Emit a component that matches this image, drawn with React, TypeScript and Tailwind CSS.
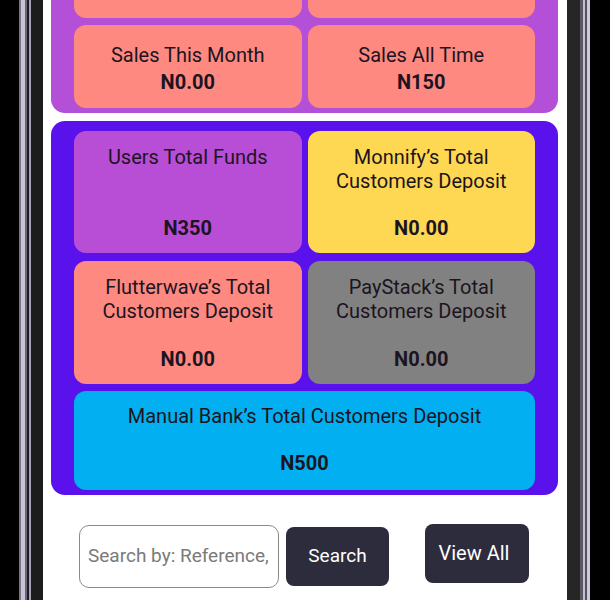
import React from "react";

const font = { fontFamily: "Roboto, 'Noto Sans', Arial, sans-serif" };

function BigCard({
  title,
  value,
  bg,
  h,
}: {
  title: React.ReactNode;
  value: string;
  bg: string;
  h: string;
}) {
  return (
    <div
      className={`flex flex-col items-center justify-between rounded-[12px] px-2 pt-[14px] pb-[13px] text-center text-[20px] leading-[24px] text-[#1c1420] ${bg} ${h}`}
    >
      <div>{title}</div>
      <div className="font-bold">{value}</div>
    </div>
  );
}

function SmallCard({ title, value, h }: { title?: string; value?: string; h: string }) {
  return (
    <div
      className={`flex flex-col items-center justify-center gap-[3px] rounded-[12px] bg-[#fd8981] pt-[4px] text-center text-[20px] leading-[24px] text-[#1c1420] ${h}`}
    >
      {title && <div>{title}</div>}
      {value && <div className="font-bold">{value}</div>}
    </div>
  );
}

export default function App() {
  return (
    <div className="flex h-[600px] w-[610px] overflow-hidden bg-black" style={font}>
      {/* left bezel */}
      <div className="flex h-full w-[43px] shrink-0">
        <div className="w-[19px] bg-black" />
        <div className="w-[2px] bg-[#7a7680]" />
        <div className="w-[4px] bg-[#cac3d8]" />
        <div className="w-[2px] bg-[#6a6670]" />
        <div className="w-[2px] bg-[#1e1e1e]" />
        <div className="w-[2px] bg-[#a69eb6]" />
        <div className="w-[12px] bg-[#1c1c1c]" />
      </div>

      {/* screen */}
      <div className="flex h-full w-[524px] shrink-0 flex-col overflow-hidden bg-white">
        {/* purple panel */}
        <div className="ml-[8px] mr-[9px] -mt-[90px] rounded-[14px] bg-[#b44fd7] px-[23px] pt-[10px] pb-[5px]">
          <div className="grid grid-cols-2 gap-x-[6px] gap-y-[7px]">
            <SmallCard h="h-[98px]" />
            <SmallCard h="h-[98px]" />
            <SmallCard title="Sales This Month" value="N0.00" h="h-[83px]" />
            <SmallCard title="Sales All Time" value="N150" h="h-[83px]" />
          </div>
        </div>

        {/* blue panel */}
        <div className="ml-[8px] mr-[9px] mt-[8px] rounded-[14px] bg-[#5a12ed] px-[23px] pt-[10px] pb-[5px]">
          <div className="grid grid-cols-2 gap-x-[6px] gap-y-[8px]">
            <BigCard title="Users Total Funds" value="N350" bg="bg-[#b84dd6]" h="h-[122px]" />
            <BigCard
              title={
                <>
                  Monnify’s Total
                  <br />
                  Customers Deposit
                </>
              }
              value="N0.00"
              bg="bg-[#fed852]"
              h="h-[122px]"
            />
            <BigCard
              title={
                <>
                  Flutterwave’s Total
                  <br />
                  Customers Deposit
                </>
              }
              value="N0.00"
              bg="bg-[#fd8981]"
              h="h-[123px]"
            />
            <BigCard
              title={
                <>
                  PayStack’s Total
                  <br />
                  Customers Deposit
                </>
              }
              value="N0.00"
              bg="bg-[#818181]"
              h="h-[123px]"
            />
          </div>
          <div className="mt-[7px] flex h-[99px] flex-col items-center justify-between rounded-[12px] bg-[#02aff0] pt-[13px] pb-[15px] text-center text-[20px] leading-[24px] text-[#1c1420]">
            <div>Manual Bank’s Total Customers Deposit</div>
            <div className="font-bold">N500</div>
          </div>
        </div>

        {/* search row */}
        <div className="flex items-start pl-[36px]">
          <div className="mt-[30px] flex h-[63px] w-[200px] items-center overflow-hidden rounded-[10px] border border-[#8a8a8a] pl-[8px]">
            <input
              className="w-full bg-transparent text-[19px] text-[#333] placeholder-[#7a7a7a] outline-none"
              placeholder="Search by: Reference,"
              style={font}
            />
          </div>
          <button className="ml-[7px] mt-[32px] flex h-[59px] w-[103px] items-center justify-center rounded-[8px] bg-[#2d2c3d] text-[19px] text-white">
            Search
          </button>
          <button className="ml-[36px] mt-[29px] flex h-[59px] w-[104px] items-center justify-center rounded-[8px] bg-[#2d2c3d] pr-[6px] pb-[2px] text-[20px] text-white">
            View All
          </button>
        </div>
      </div>

      {/* right bezel */}
      <div className="flex h-full w-[43px] shrink-0">
        <div className="w-[13px] bg-[#262626]" />
        <div className="w-[3px] bg-[#5c5a60]" />
        <div className="w-[2px] bg-[#c6bed4]" />
        <div className="w-[2px] bg-[#55535a]" />
        <div className="w-[3px] bg-[#d0c8dc]" />
        <div className="w-[20px] bg-black" />
      </div>
    </div>
  );
}
